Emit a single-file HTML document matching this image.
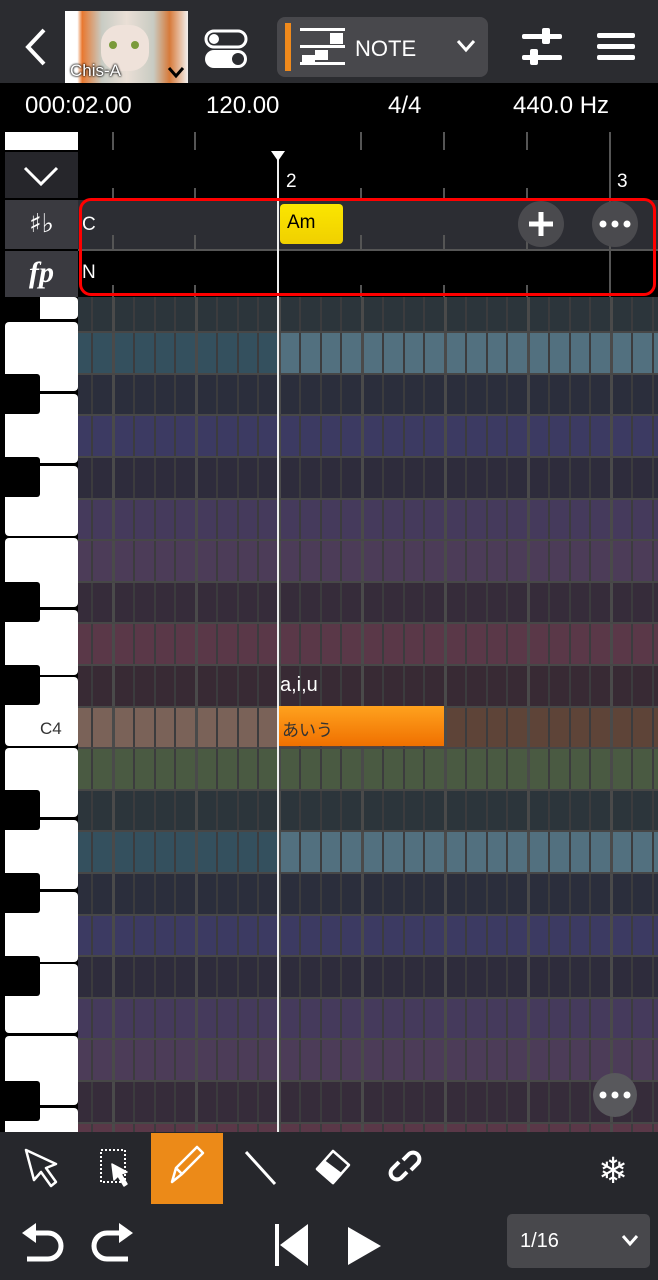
<!DOCTYPE html>
<html><head><meta charset="utf-8"><style>
*{margin:0;padding:0;box-sizing:border-box}
body{width:658px;height:1280px;overflow:hidden;background:#000;position:relative;font-family:"Liberation Sans","Noto Sans CJK JP",sans-serif;color:#fff}
.a{position:absolute}
</style></head><body>
<!-- top bar -->
<div class="a" style="left:0;top:0;width:658px;height:83px;background:#2b2c30"></div>
<svg class="a" style="left:0;top:0" width="658" height="83">
<path d="M44 30 L28 47 L44 64" stroke="#fff" stroke-width="4" fill="none"/>
<rect x="206" y="31" width="40" height="16" rx="8" fill="none" stroke="#fff" stroke-width="3"/>
<circle cx="214" cy="39" r="5" fill="#fff"/>
<rect x="205" y="50" width="42" height="18" rx="9" fill="#fff"/>
<circle cx="238" cy="59" r="6" fill="#2b2c30"/>
<rect x="277" y="17" width="211" height="60" rx="8" fill="#48484c"/>
<rect x="285" y="23" width="6" height="48" fill="#f08a1c"/>
<g fill="#fff"><rect x="300" y="28" width="45" height="3"/><rect x="330" y="33" width="13" height="11"/><rect x="300" y="45" width="45" height="3"/><rect x="315" y="50" width="13" height="10"/><rect x="300" y="62" width="45" height="3"/><rect x="302" y="55" width="13" height="8"/></g>
<text x="355" y="56" font-size="22" fill="#fff" font-family="Liberation Sans">NOTE</text>
<path d="M458 41 L466 50 L474 41" stroke="#fff" stroke-width="3" fill="none"/>
<g fill="#fff"><rect x="522" y="34" width="40" height="5" rx="2"/><rect x="542" y="28" width="8" height="16" rx="2"/><rect x="522" y="55" width="40" height="5" rx="2"/><rect x="530" y="49" width="8" height="16" rx="2"/></g>
<g fill="#fff"><rect x="597" y="33" width="38" height="5" rx="2"/><rect x="597" y="44" width="38" height="5" rx="2"/><rect x="597" y="55" width="38" height="5" rx="2"/></g>
</svg>
<!-- avatar -->
<div class="a" style="left:65px;top:11px;width:123px;height:72px;background:linear-gradient(90deg,#fff 0,#fff 10%,#e87830 14%,#c8ccc4 30%,#eadfd6 50%,#c8cbc2 72%,#d77a3a 85%,#f3f0ee 100%);overflow:hidden">
<div class="a" style="left:36px;top:14px;width:48px;height:46px;background:#efe2da;border-radius:40%"></div>
<div class="a" style="left:44px;top:30px;width:8px;height:8px;background:#7a9a3a;border-radius:50%"></div>
<div class="a" style="left:66px;top:30px;width:8px;height:8px;background:#7a9a3a;border-radius:50%"></div>
<div class="a" style="left:5px;top:50px;font-size:17px;color:#fff;text-shadow:0 0 2px #000,0 0 2px #000">Chis-A</div>
<svg class="a" style="left:102px;top:54px" width="18" height="14"><path d="M2 3 L9 11 L16 3" stroke="#000" stroke-width="3" fill="none"/></svg>
</div>
<!-- info bar -->
<div class="a" style="left:25px;top:92px;font-size:24px">000:02.00</div>
<div class="a" style="left:206px;top:92px;font-size:24px">120.00</div>
<div class="a" style="left:388px;top:92px;font-size:24px">4/4</div>
<div class="a" style="left:513px;top:92px;font-size:24px">440.0 Hz</div>
<!-- left sidebar -->
<div class="a" style="left:5px;top:132px;width:73px;height:18px;background:#fff"></div>
<div class="a" style="left:5px;top:152px;width:73px;height:46px;background:#26262b"></div>
<svg class="a" style="left:5px;top:152px" width="73" height="46"><path d="M20 16 L36 32 L52 16" stroke="#fff" stroke-width="3" fill="none"/></svg>
<div class="a" style="left:5px;top:200px;width:73px;height:49px;background:#3a3a40;font-family:'DejaVu Serif',serif;font-size:26px;text-align:center;line-height:49px">♯♭</div>
<div class="a" style="left:5px;top:251px;width:73px;height:46px;background:#3a3a40;font-family:'Liberation Serif',serif;font-style:italic;font-size:30px;font-weight:bold;text-align:center;line-height:44px">fp</div>
<!-- chord rows -->
<div class="a" style="left:78px;top:200px;width:580px;height:50px;background:#2c2d33"></div>
<div class="a" style="left:78px;top:249px;width:580px;height:2px;background:#555"></div>
<svg class="a" style="left:0;top:130px" width="658" height="167">
<g stroke="#555" stroke-width="2">
<path d="M113 2 V20 M195 2 V20 M361 2 V20 M444 2 V20 M527 2 V20 M610 2 V167 M113 58 V70 M195 58 V70 M361 58 V70 M444 58 V70 M527 58 V70"/>
<path d="M113 105 V120 M195 105 V120 M361 105 V120 M444 105 V120 M527 105 V120 M113 155 V167 M195 155 V167 M361 155 V167 M444 155 V167 M527 155 V167"/>
</g></svg>
<div class="a" style="left:286px;top:171px;font-size:19px">2</div>
<div class="a" style="left:617px;top:171px;font-size:19px">3</div>
<div class="a" style="left:82px;top:214px;font-size:19px">C</div>
<div class="a" style="left:82px;top:262px;font-size:19px">N</div>
<div class="a" style="left:280px;top:204px;width:63px;height:40px;background:linear-gradient(#fbe600,#f0d000);border-radius:4px;color:#000;font-size:19px;padding:8px 0 0 7px">Am</div>
<svg class="a" style="left:0;top:0" width="658" height="300">
<circle cx="541" cy="224" r="23" fill="#4a4a4e"/><path d="M541 212 V236 M529 224 H553" stroke="#fff" stroke-width="5"/>
<circle cx="615" cy="224" r="23" fill="#4a4a4e"/><circle cx="603" cy="224" r="3.5" fill="#fff"/><circle cx="615" cy="224" r="3.5" fill="#fff"/><circle cx="627" cy="224" r="3.5" fill="#fff"/>
</svg>
<!-- grid -->
<svg class="a" style="left:0;top:297px" width="658" height="835" viewBox="0 297 658 835">
<defs>
<pattern id="g" x="112" y="0" width="83" height="2000" patternUnits="userSpaceOnUse">
<rect x="0" y="0" width="3" height="2000" fill="#4a4a4a"/>
<rect x="21" y="0" width="2" height="2000" fill="#3c3c3e"/>
<rect x="42" y="0" width="2" height="2000" fill="#3c3c3e"/>
<rect x="62" y="0" width="2" height="2000" fill="#3c3c3e"/>
</pattern>
</defs>
<g id="rows">
<rect x="78" y="290.5" width="580" height="41.6" fill="#2c353b"/>
<rect x="78" y="332.1" width="200" height="41.6" fill="#34505e"/><rect x="278" y="332.1" width="380" height="41.6" fill="#52707f"/>
<rect x="78" y="373.7" width="580" height="41.6" fill="#2b2e3c"/>
<rect x="78" y="415.3" width="580" height="41.6" fill="#3c3a62"/>
<rect x="78" y="456.9" width="580" height="41.6" fill="#2e2c3c"/>
<rect x="78" y="498.5" width="580" height="41.6" fill="#453a5c"/>
<rect x="78" y="540.1" width="580" height="41.6" fill="#4c3c58"/>
<rect x="78" y="581.7" width="580" height="41.6" fill="#362c3a"/>
<rect x="78" y="623.3" width="580" height="41.6" fill="#5a3848"/>
<rect x="78" y="664.9" width="580" height="41.6" fill="#382a34"/>
<rect x="78" y="706.5" width="200" height="41.6" fill="#7a6258"/><rect x="278" y="706.5" width="380" height="41.6" fill="#5e4438"/>
<rect x="78" y="748.1" width="580" height="41.6" fill="#4a5a42"/>
<rect x="78" y="789.7" width="580" height="41.6" fill="#2c353b"/>
<rect x="78" y="831.3" width="200" height="41.6" fill="#34505e"/><rect x="278" y="831.3" width="380" height="41.6" fill="#52707f"/>
<rect x="78" y="872.9" width="580" height="41.6" fill="#2b2e3c"/>
<rect x="78" y="914.5" width="580" height="41.6" fill="#3c3a62"/>
<rect x="78" y="956.1" width="580" height="41.6" fill="#2e2c3c"/>
<rect x="78" y="997.7" width="580" height="41.6" fill="#453a5c"/>
<rect x="78" y="1039.3" width="580" height="41.6" fill="#4c3c58"/>
<rect x="78" y="1080.9" width="580" height="41.6" fill="#362c3a"/>
<rect x="78" y="1122.5" width="580" height="41.6" fill="#5a3848"/>
</g>
<rect x="78" y="297" width="580" height="835" fill="url(#g)"/>
<g fill="#474747">
<rect x="78" y="331" width="580" height="2"/><rect x="78" y="373" width="580" height="2"/><rect x="78" y="414" width="580" height="2"/><rect x="78" y="456" width="580" height="2"/><rect x="78" y="498" width="580" height="2"/><rect x="78" y="539" width="580" height="2"/><rect x="78" y="581" width="580" height="2"/><rect x="78" y="622" width="580" height="2"/><rect x="78" y="664" width="580" height="2"/><rect x="78" y="706" width="580" height="2"/><rect x="78" y="747" width="580" height="2"/><rect x="78" y="789" width="580" height="2"/><rect x="78" y="830" width="580" height="2"/><rect x="78" y="872" width="580" height="2"/><rect x="78" y="914" width="580" height="2"/><rect x="78" y="955" width="580" height="2"/><rect x="78" y="997" width="580" height="2"/><rect x="78" y="1038" width="580" height="2"/><rect x="78" y="1080" width="580" height="2"/><rect x="78" y="1122" width="580" height="2"/>
</g>
<!-- piano -->
<rect x="0" y="297" width="78" height="835" fill="#000"/>
<g fill="#fff">
<rect x="5" y="297" width="73" height="22" rx="4"/>
<rect x="5" y="322" width="73" height="69" rx="4"/>
<rect x="5" y="394" width="73" height="69" rx="4"/>
<rect x="5" y="466" width="73" height="70" rx="4"/>
<rect x="5" y="538" width="73" height="69" rx="4"/>
<rect x="5" y="610" width="73" height="65" rx="4"/>
<rect x="5" y="677" width="73" height="69" rx="4"/>
<rect x="5" y="748" width="73" height="69" rx="4"/>
<rect x="5" y="820" width="73" height="69" rx="4"/>
<rect x="5" y="892" width="73" height="70" rx="4"/>
<rect x="5" y="964" width="73" height="69" rx="4"/>
<rect x="5" y="1036" width="73" height="69" rx="4"/>
<rect x="5" y="1108" width="73" height="30" rx="4"/>
</g>
<g fill="#000">
<rect x="0" y="290" width="40" height="32" rx="3"/>
<rect x="0" y="374" width="40" height="40" rx="3"/>
<rect x="0" y="457" width="40" height="40" rx="3"/>
<rect x="0" y="582" width="40" height="40" rx="3"/>
<rect x="0" y="665" width="40" height="40" rx="3"/>
<rect x="0" y="790" width="40" height="40" rx="3"/>
<rect x="0" y="873" width="40" height="40" rx="3"/>
<rect x="0" y="956" width="40" height="40" rx="3"/>
<rect x="0" y="1081" width="40" height="40" rx="3"/>
</g>
<text x="40" y="734" font-size="17" fill="#333" font-family="Liberation Sans">C4</text>
<circle cx="615" cy="1095" r="22" fill="#58585c"/><circle cx="603" cy="1095" r="3.5" fill="#fff"/><circle cx="615" cy="1095" r="3.5" fill="#fff"/><circle cx="627" cy="1095" r="3.5" fill="#fff"/>
</svg>
<!-- note -->
<div class="a" style="left:279px;top:706px;width:165px;height:40px;background:linear-gradient(#ffa21e,#f07000);color:#333;font-size:17px;padding:10px 0 0 3px">あいう</div>
<div class="a" style="left:280px;top:674px;font-size:20px">a,i,u</div>
<!-- playhead -->
<div class="a" style="left:277px;top:152px;width:2px;height:980px;background:#eee"></div>
<svg class="a" style="left:270px;top:150px" width="16" height="12"><path d="M1 1 H15 L8 11Z" fill="#fff"/></svg>
<!-- red outline -->
<div class="a" style="left:79px;top:198px;width:577px;height:98px;border:3px solid #f00;border-radius:12px"></div>
<!-- bottom -->
<div class="a" style="left:0;top:1132px;width:658px;height:148px;background:#26272c"></div>
<div class="a" style="left:151px;top:1133px;width:72px;height:71px;background:#ec8a18"></div>
<div class="a" style="left:507px;top:1214px;width:143px;height:54px;background:#48484c;border-radius:5px"></div>
<div class="a" style="left:520px;top:1230px;font-size:20px">1/16</div>
<svg class="a" style="left:0;top:1132px" width="658" height="148">
<g stroke="#fff" stroke-width="2.5" fill="none" stroke-linejoin="round">
<path d="M26 18 L56 32 L46 36 L56 50 L51 54 L41 40 L34 48 Z"/>
<rect x="101" y="18" width="24" height="32" stroke-dasharray="2 2" stroke-width="2"/>
<path d="M112 32 L127 40 L121 42 L127 52 L124 54 L118 44 L114 48 Z" fill="#fff" stroke-width="1.5"/>
<path d="M172 50 L176 36 L197 15 L203 21 L182 42 Z M176 36 L182 42"/>
<path d="M246 20 L275 52" stroke-width="3"/>
<path d="M317 37 L333 19 L349 33 L333 51 Z"/>
<path d="M317 37 L325 44 L333 51 L341 42 L325 30 Z" fill="#fff"/>
<path d="M399 30 L393 36 A6 6 0 0 0 401 46 L407 40 M411 38 L417 32 A6 6 0 0 0 409 22 L403 28" stroke-width="4"/>
</g>
<text x="598" y="51" font-size="36" fill="#fff" font-family="DejaVu Sans">❄</text>
<g stroke="#fff" stroke-width="5" fill="none">
<path d="M27 127 H48 A13 13 0 0 0 48 101 H32"/>
<path d="M128 127 H107 A13 13 0 0 1 107 101 H123"/>
</g>
<path d="M22 101 L36 91 V111 Z" fill="#fff"/>
<path d="M133 101 L119 91 V111 Z" fill="#fff"/>
<rect x="275" y="92" width="4" height="42" fill="#fff"/>
<path d="M308 92 V134 L280 113 Z" fill="#fff"/>
<path d="M348 95 V133 L381 114 Z" fill="#fff"/>
<path d="M623 104 L630 112 L637 104" stroke="#fff" stroke-width="3" fill="none"/>
</svg>
</body></html>
